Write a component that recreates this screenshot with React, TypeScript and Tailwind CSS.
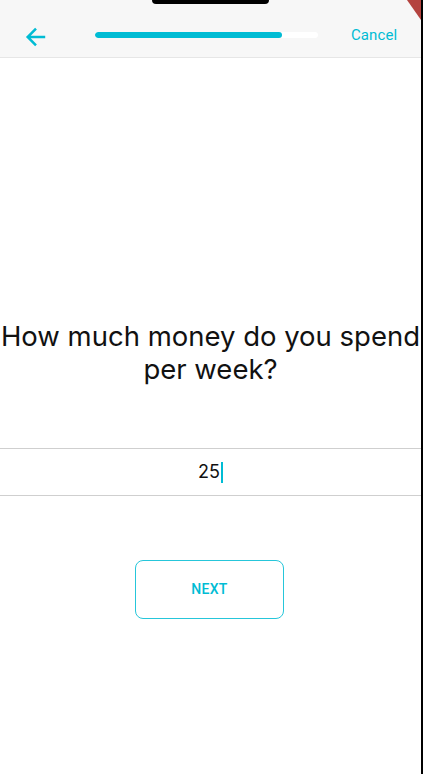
import React from "react";

export default function App() {
  return (
    <div className="relative w-[423px] h-[774px] overflow-hidden bg-white flex flex-col border-r-2 border-black" style={{ fontFamily: "Roboto, 'Noto Sans', sans-serif" }}>
      {/* notch */}
      <div className="absolute left-[152px] top-0 w-[117px] h-[4px] bg-black rounded-b-[6px]" />
      {/* debug banner corner */}
      <svg className="absolute right-0 top-0" width="16" height="22" viewBox="0 0 16 22">
        <polygon points="2,0 16,0 16,20" fill="#b4433f" />
      </svg>
      {/* header */}
      <div className="h-[58px] shrink-0 bg-[#f7f7f7] border-b border-[#e6e6e6] flex items-end pb-[7px]">
        <div className="w-[72px] flex justify-center h-[30px] items-center">
          <svg width="26" height="26" viewBox="0 0 24 24" className="ml-[-1px] mt-[3px]">
            <path d="M20.5 12H4.5M12 4.2L4.3 12 12 19.8" fill="none" stroke="#00bcd4" strokeWidth="2.3" strokeLinecap="butt" />
          </svg>
        </div>
        <div className="flex-1 h-[30px] flex items-center pl-[23px] pr-[33px]">
          <div className="w-full h-[6px] bg-white rounded-full overflow-hidden">
            <div className="h-full w-[84%] bg-[#00bcd4] rounded-full" />
          </div>
        </div>
        <div className="w-[70px] h-[30px] flex items-center">
          <span className="text-[15px] text-[#00bcd4] tracking-[0.1px]">Cancel</span>
        </div>
      </div>
      {/* content */}
      <div className="flex flex-col items-center pt-[262px]">
        <h1 className="text-[27.5px] leading-[33px] text-[#111] text-center w-full whitespace-nowrap" style={{ fontFamily: "Inter, 'Liberation Sans', sans-serif" }}>
          How much money do you spend<br />per week?
        </h1>
        <div className="mt-[62px] w-full h-[48px] border-y border-[#cfcfcf] flex items-center justify-center">
          <span className="text-[18px] text-[#111] leading-none" style={{ fontFamily: "Inter, 'Liberation Sans', sans-serif" }}>25</span>
          <span className="w-[2px] h-[21px] bg-[#00bcd4] ml-[1px]" />
        </div>
        <button className="mt-[64px] ml-[-2px] w-[149px] h-[59px] border border-[#26c6da] rounded-[8px] flex items-center justify-center text-[14px] font-medium text-[#00bcd4] tracking-[0.3px]">
          NEXT
        </button>
      </div>
    </div>
  );
}
